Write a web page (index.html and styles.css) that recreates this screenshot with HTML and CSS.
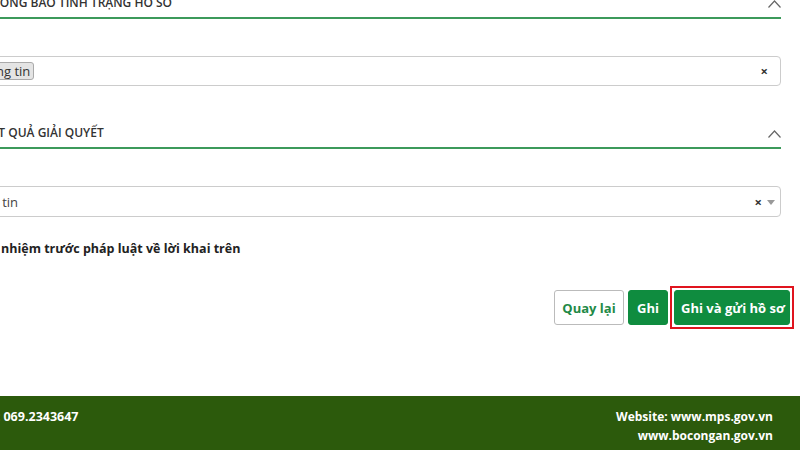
FILE: index.html
```html
<!DOCTYPE html>
<html lang="vi">
<head>
  <meta charset="UTF-8" />
  <title>Nộp hồ sơ</title>
  <link rel="stylesheet" href="styles.css">
</head>
<body>
  <div class="main">
    <div class="section-head first">
      <span class="head-title">Thông báo tình trạng hồ sơ</span>
      <svg class="chevron" width="13" height="8" viewBox="0 0 13 8"><polyline points="0.5,7.5 6.5,1 12.5,7.5" fill="none" stroke="#666" stroke-width="1.2"/></svg>
    </div>
    <div class="field">
      <div class="select multi">
        <span class="tag">Không có thông tin</span>
        <span class="clear">×</span>
      </div>
    </div>

    <div class="section-head">
      <span class="head-title">Kết quả giải quyết</span>
      <svg class="chevron" width="13" height="8" viewBox="0 0 13 8"><polyline points="0.5,7.5 6.5,1 12.5,7.5" fill="none" stroke="#666" stroke-width="1.2"/></svg>
    </div>
    <div class="field">
      <div class="select single">
        <span class="value">Chọn thông tin</span>
        <span class="clear">×</span>
        <span class="arrow"></span>
      </div>
    </div>

    <label class="commit">Tôi xin chịu trách nhiệm trước pháp luật về lời khai trên</label>

    <div class="actions">
      <button class="btn btn-outline">Quay lại</button>
      <button class="btn btn-green btn-save">Ghi</button>
      <span class="highlight"><button class="btn btn-green btn-send">Ghi và gửi hồ sơ</button></span>
    </div>
  </div>

  <footer>
    <div class="footer-left">Điện thoại: 069.2343647</div>
    <div class="footer-right">
      Website: www.mps.gov.vn<br>
      www.bocongan.gov.vn
    </div>
  </footer>
</body>
</html>
```

FILE: styles.css
```css
* { box-sizing: border-box; }
body, html { margin: 0; padding: 0; }
body {
  width: 800px;
  height: 450px;
  overflow: hidden;
  font-family: "Open Sans", Arial, sans-serif;
  color: #333;
  background: #fff;
  display: flex;
  flex-direction: column;
}
.main {
  margin-left: -200px;
  width: 990px;
  flex: 1;
  margin-top: -7px;
}
.section-head {
  display: flex;
  justify-content: space-between;
  align-items: center;
  margin-right: 9px;
  padding-left: 184px;
  padding-bottom: 4px;
  line-height: 20px;
  border-bottom: 2px solid #3c9a5b;
  margin-top: 37px;
}
.section-head.first { margin-top: 0; }
.head-title {
  font-size: 12px;
  font-weight: 600;
  text-transform: uppercase;
  color: #333;
}
.chevron { margin-top: 2px; }
.field {
  margin-top: 37px;
  margin-right: 9px;
  padding-left: 50px;
}
.select {
  display: flex;
  align-items: center;
  height: 30px;
  border: 1px solid #ccc;
  border-radius: 4px;
  background: #fff;
  padding: 0 12px 0 6px;
  font-size: 13px;
}
.select.single { height: 31px; padding-right: 5px; }
.tag {
  margin-left: 55px;
  background: #e4e4e4;
  border: 1px solid #aaa;
  border-radius: 3px;
  padding: 0 3px;
  line-height: 16px;
  font-size: 13px;
  color: #333;
}
.value { margin-left: 71px; color: #444; }
.clear {
  margin-left: auto;
  font-weight: 700;
  font-size: 13px;
  color: #333;
}
.select.single .clear { margin-right: 5px; }
.arrow {
  width: 0;
  height: 0;
  border-left: 4px solid transparent;
  border-right: 4px solid transparent;
  border-top: 5px solid #999;
  margin-top: 2px;
}
.commit {
  display: block;
  margin-top: 22px;
  padding-left: 90px;
  font-size: 12.5px;
  font-weight: 700;
  line-height: 20px;
  color: #222;
}
.actions {
  display: flex;
  justify-content: flex-end;
  align-items: center;
  margin-top: 27px;
  margin-right: -4px;
}
.btn {
  height: 35px;
  border-radius: 3px;
  font-family: "Open Sans", Arial, sans-serif;
  font-size: 13px;
  font-weight: 700;
  padding: 0 6px;
  white-space: nowrap;
  cursor: pointer;
}
.btn-outline {
  background: #fff;
  border: 1px solid #bbb;
  color: #1f8a47;
  width: 70px;
}
.btn-green {
  background: #0f8c3f;
  border: 1px solid #0f8c3f;
  color: #fff;
}
.btn-save { margin-left: 4px; width: 40px; }
.highlight {
  display: flex;
  margin-left: 2px;
  padding: 2px;
  border: 2px solid #e0141e;
}
.btn-send { width: 116px; display: block; }
footer {
  height: 54px;
  background: #2c5a0c;
  color: #fff;
  font-size: 12px;
  font-weight: 700;
  line-height: 19px;
  display: flex;
  justify-content: space-between;
  padding: 11px 27px 0 0;
}
.footer-left { margin-left: -68px; font-size: 12.5px; }
.footer-right { text-align: right; }
```
